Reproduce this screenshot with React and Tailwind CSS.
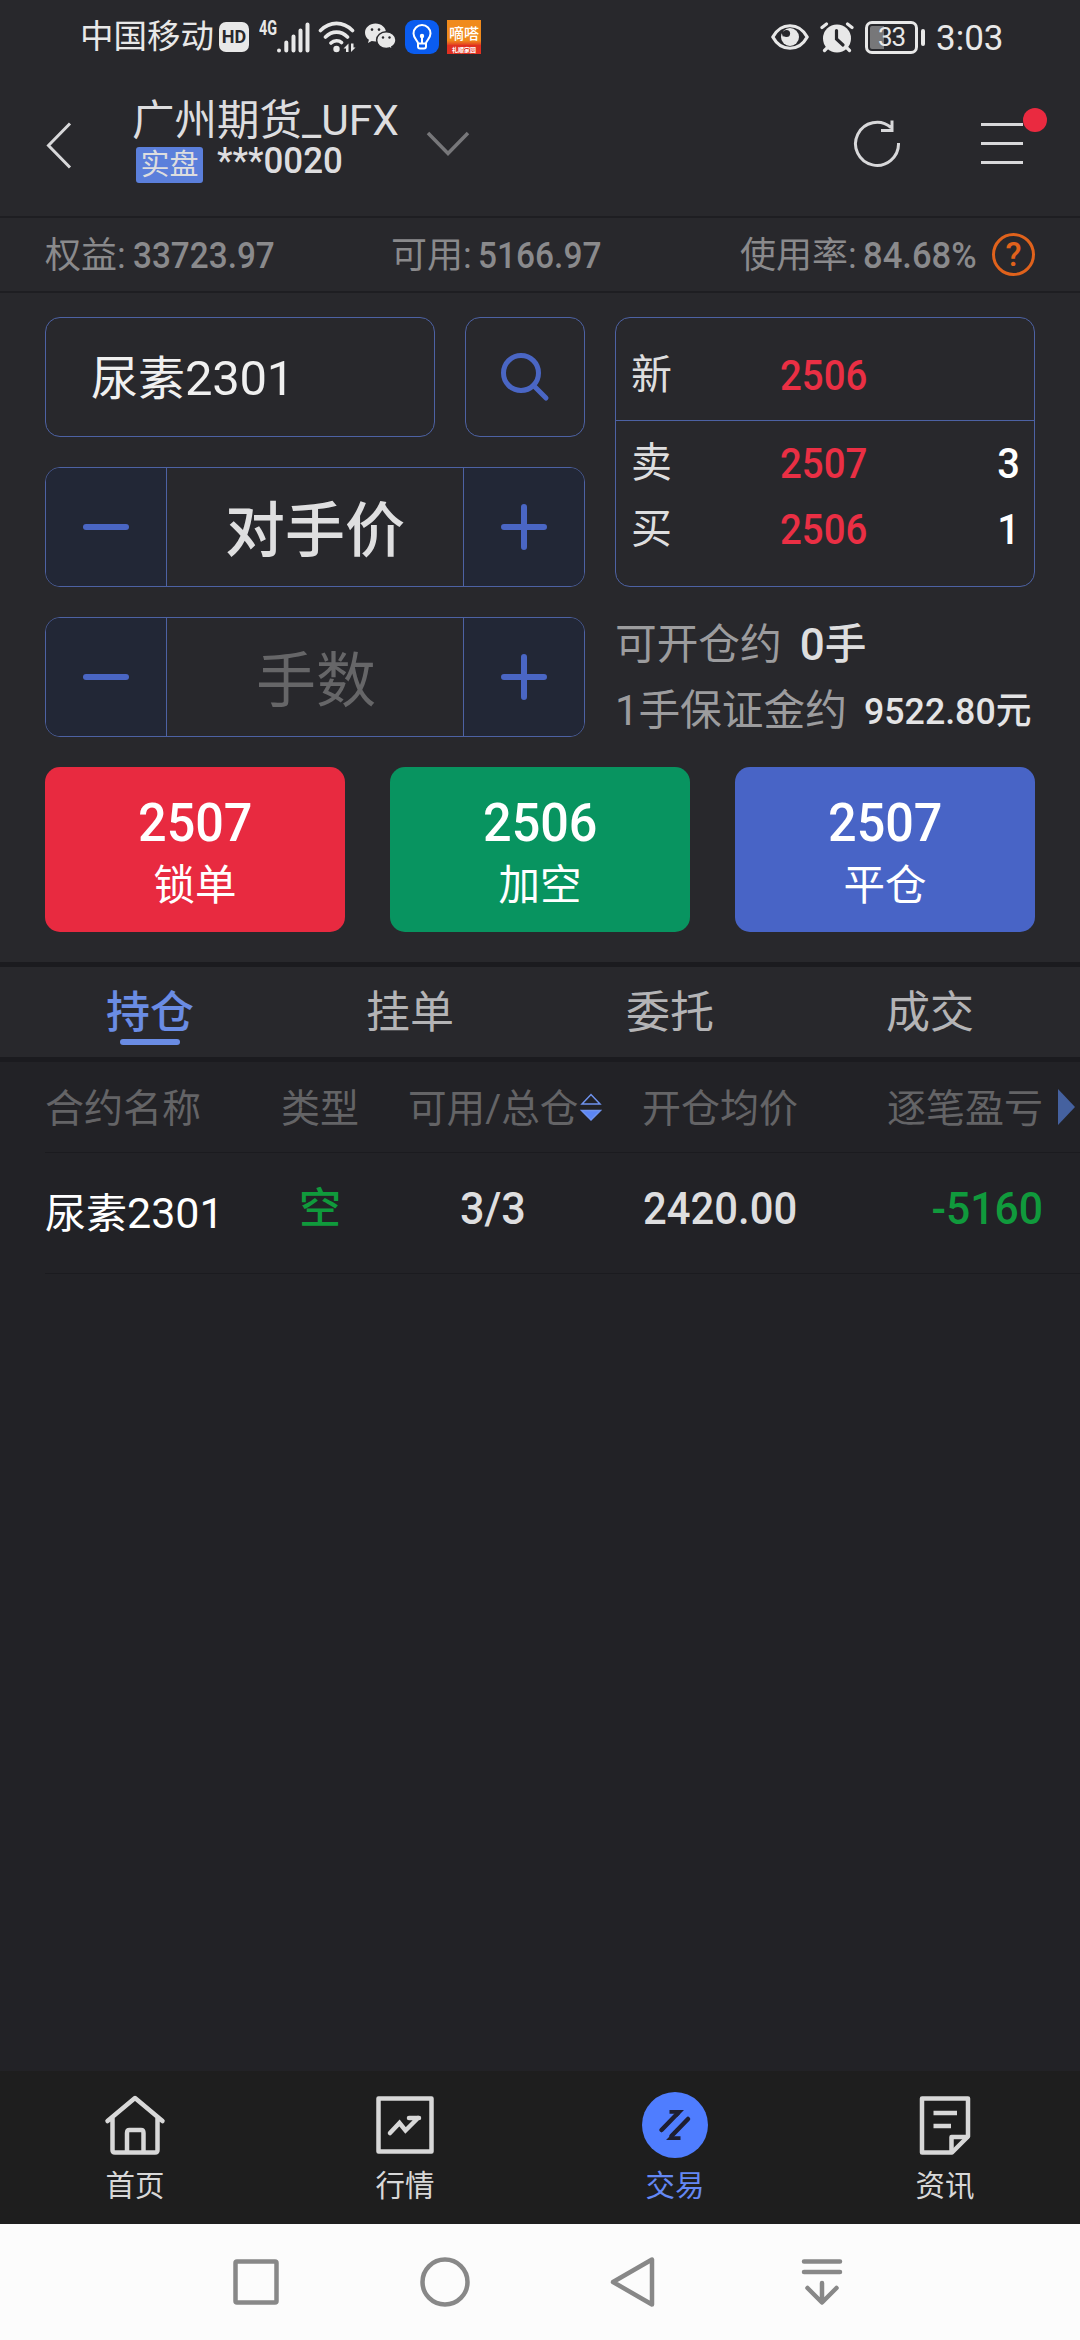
const Num = ({ className = '', children }) => (
  <span className={`inline-block font-['Roboto','Noto_Sans_CJK_SC',sans-serif] font-medium whitespace-nowrap ${className}`}>{children}</span>
)

function StatusBar() {
  return (
    <div className="flex h-[74px] items-center pl-[80px] text-[#e8e8e8]">
      <span className="w-[139px] text-[33.500px] leading-none whitespace-nowrap">中国移动</span>
      <span className="flex h-[30px] w-[30px] shrink-0 items-center justify-center rounded-[7px] bg-[#e8e8e8] font-['Roboto',sans-serif] text-[18px] leading-none font-bold text-[#28282c]">HD</span>
      <span className="ml-[10px] w-[18px] shrink-0 pb-[18px] font-['Roboto',sans-serif] text-[20px] leading-none font-bold"><span className="inline-block origin-left scale-x-[0.72]">4G</span></span>
      <svg className="h-[31px] w-[33px] shrink-0" viewBox="0 0 33 31" stroke="#e8e8e8" strokeWidth="4" strokeLinecap="round">
        <path d="M2 28.5V28.6M9.300 28.500V20.500M16.500 28.500V14.500M23.500 28.500V8.500M30.500 28.500V2.500" />
      </svg>
      <svg className="ml-[8px] h-[32px] w-[40px] shrink-0" viewBox="0 0 40 32" fill="none" stroke="#e8e8e8" strokeWidth="3.600" strokeLinecap="round">
        <path d="M2.500 9.500C12 0 25 0 34.500 9.500M7.500 16C14 9.500 23 9.500 29.500 16M13 22C16 19 21 19 23.500 21.500" />
        <circle cx="18.500" cy="28" r="3.200" fill="#e8e8e8" stroke="none" />
        <path d="M25.500 27.500L30.500 22.500V31H28V27.500zM33 22.500V31L37.500 26.500H35.500V22.500z" stroke="none" fill="#e8e8e8" />
      </svg>
      <svg className="ml-[7px] h-[28px] w-[32px] shrink-0" viewBox="0 0 32 28" fill="#e8e8e8">
        <path d="M10.500 0.500C4.700 0.500 0 4.600 0 9.700c0 2.900 1.500 5.400 3.900 7.100L3 20l3.700-2c1.200.3 2.500.5 3.800.5C16.300 18.500 21 14.600 21 9.600S16.300.5 10.500.5z" />
        <path d="M21.300 8.800c-5.500 0-9.700 3.700-9.700 8.300s4.200 8.300 9.700 8.300c1.100 0 2.200-.2 3.200-.5l3.100 1.800-.8-2.800c2.500-1.500 4.200-4 4.200-6.800 0-4.600-4.300-8.300-9.700-8.300z" stroke="#28282c" strokeWidth="1.500" />
        <g fill="#28282c"><circle cx="7" cy="6.600" r="1.300" /><circle cx="14" cy="6.600" r="1.300" /><circle cx="18" cy="14.500" r="1.200" /><circle cx="24.500" cy="14.500" r="1.200" /></g>
      </svg>
      <svg className="ml-[8px] h-[34px] w-[34px] shrink-0" viewBox="0 0 34 34" fill="none" stroke="#fff" strokeWidth="2">
        <rect width="34" height="34" rx="9" fill="#0a5cf0" stroke="none" />
        <path d="M13 23.500C13 20.500 8.500 18.500 8.500 13.500a8.500 8.500 0 0 1 17 0c0 5-4.500 7-4.500 10V26.500Q21 28.500 19 28.500H15Q13 28.500 13 26.500zM13 23.500h8M17 23v-7" />
        <circle cx="17" cy="16" r="2.200" fill="#fff" stroke="none" />
      </svg>
      <span className="ml-[8px] flex h-[34px] w-[34px] shrink-0 flex-col justify-between overflow-hidden bg-linear-to-b from-[#f08a1c] from-60% to-[#e03020] to-75% text-white">
        <span className="pt-[7px] text-center text-[15px] leading-none font-medium whitespace-nowrap">嘀嗒</span>
        <span className="flex h-[9px] items-center justify-center text-[6px] leading-none font-bold whitespace-nowrap">礼顺家园</span>
      </span>
      <svg className="ml-[290px] h-[28px] w-[38px] shrink-0" viewBox="0 0 38 28" fill="none">
        <path d="M1.800 14C10-1 28-1 36.200 14 28 29 10 29 1.800 14z" stroke="#e8e8e8" strokeWidth="3.200" strokeLinejoin="round" />
        <circle cx="19" cy="14" r="9" fill="#e8e8e8" />
        <circle cx="15.500" cy="10.500" r="3.600" fill="#28282c" />
        <path d="M10 8l5 1-3 5z" fill="#28282c" />
      </svg>
      <svg className="ml-[11px] h-[31px] w-[34px] shrink-0" viewBox="0 0 34 31" fill="none" strokeLinecap="round">
        <circle cx="17" cy="16.500" r="14" fill="#e8e8e8" />
        <path d="M2 5.500L6.500 2M32 5.500L27.500 2M4.500 28.500l3-3M29.500 28.500l-3-3" stroke="#e8e8e8" strokeWidth="3.200" />
        <path d="M16.500 8.500v8.500l6.500 6" stroke="#28282c" strokeWidth="3.200" />
      </svg>
      <span className="ml-[11px] flex h-[33px] w-[53px] shrink-0 items-center justify-center rounded-[7px] border-[3px] border-[#e8e8e8] bg-linear-to-r from-[#777779] from-33% to-transparent to-33% bg-origin-content p-[2px] font-['Roboto',sans-serif] text-[26px] leading-none [background-clip:content-box]"><span className="-tracking-[1px]">33</span></span>
      <span className="ml-[3px] h-[17px] w-[4px] shrink-0 rounded-[2px] bg-[#e8e8e8]" />
      <span className="ml-[11px] pt-[2px] font-['Roboto',sans-serif] text-[35px] leading-none">3:03</span>
    </div>
  )
}

function Header() {
  return (
    <div className="flex h-[142px] text-[#dddddf]">
      <svg className="mt-[46px] ml-[46px] h-[50px] w-[26px] shrink-0" viewBox="0 0 26 50" fill="none" stroke="#d8d8da" strokeWidth="3">
        <path d="M24 3.500L2.500 25.500L24 47.500" />
      </svg>
      <div className="mt-[25px] ml-[60px] w-[270px] shrink-0">
        <div className="h-[48px] text-[42.500px] leading-[44px] whitespace-nowrap">广州期货_UFX</div>
        <div className="flex h-[36px] items-center pl-[4px]">
          <span className="flex h-[36px] w-[67px] items-center justify-center rounded-[3px] bg-[#5b7fdb] text-[29px] leading-none">实盘</span>
          <Num className="ml-[14px] origin-left scale-x-[0.97] pb-[8px] text-[36px] leading-none">***0020</Num>
        </div>
      </div>
      <svg className="mt-[56px] ml-[24px] h-[28px] w-[44px] shrink-0" viewBox="0 0 44 28" fill="none" stroke="#77777a" strokeWidth="3.500">
        <path d="M2 3L22 23.500L42 3" />
      </svg>
      <svg className="mt-[44px] ml-[383px] h-[50px] w-[48px] shrink-0" viewBox="0 0 48 50" fill="none" stroke="#d8d8da" strokeWidth="3">
        <path d="M45.500 25A21.500 21.500 0 1 1 38 9.500M39 2.500V12.500H28" />
      </svg>
      <div className="relative mt-[49px] ml-[80px] h-[41px] w-[42px] shrink-0">
        <div className="flex h-full flex-col justify-between"><i className="h-[3px] bg-[#d8d8da]" /><i className="h-[3px] bg-[#d8d8da]" /><i className="h-[3px] bg-[#d8d8da]" /></div>
        <span className="absolute -top-[15px] left-[42px] h-[24px] w-[24px] rounded-full bg-[#ea2a40]" />
      </div>
    </div>
  )
}

function Funds() {
  return (
    <div className="flex h-[77px] items-center border-y-2 border-[#1e1e22] pb-[1px] text-[36px] leading-none whitespace-nowrap text-[#8a8a8c]">
      <div className="ml-[45px] flex w-[346px] items-center pt-[4px]"><span className="w-[88px]">权益:</span><Num className="origin-left scale-x-[0.925]">33723.97</Num></div>
      <div className="flex w-[347px] items-center pt-[4px]"><span className="w-[87px]">可用:</span><Num className="origin-left scale-x-[0.93]">5166.97</Num></div>
      <div className="flex w-[254px] items-center pt-[4px]"><span className="w-[125px] pl-[2px]">使用率:</span><Num className="origin-left scale-x-[0.96]">84.68%</Num></div>
      <span className="flex h-[43px] w-[43px] items-center justify-center rounded-full border-[3px] border-[#e0621c] font-['Roboto',sans-serif] text-[33px] leading-none font-medium text-[#e0621c]">?</span>
    </div>
  )
}

function Stepper({ children, muted }) {
  return (
    <div className="flex h-[120px] w-[540px] overflow-hidden rounded-[15px] border border-[#4d62a4]">
      <div className="flex w-[121px] items-center justify-center border-r border-[#4d62a4] bg-[#222736]"><i className="h-[6px] w-[46px] rounded-[3px] bg-[#4a66c4]" /></div>
      <div className={muted ? 'flex flex-1 items-center justify-center pt-[9px] pl-[2px] text-[60px] leading-none text-[#666668]' : 'flex flex-1 items-center justify-center pt-[9px] text-[60px] leading-none font-medium text-[#dfdfe0]'}>{children}</div>
      <div className="flex w-[121px] items-center justify-center border-l border-[#4d62a4] bg-[#222736]">
        <svg className="h-[46px] w-[46px]" viewBox="0 0 46 46" stroke="#4a66c4" strokeWidth="6" strokeLinecap="round"><path d="M3 23H43M23 3V43" /></svg>
      </div>
    </div>
  )
}

function QuoteRow({ label, price, qty }) {
  return (
    <div className="flex h-[66px] items-center pt-[3px] pr-[14px] pl-[15px] text-[41px] leading-none">
      <span className="w-[149px] text-[#dededf]">{label}</span>
      <Num className="origin-left scale-x-[0.915] text-[42px] text-[#ea2f44]">{price}</Num>
      <Num className="ml-auto origin-right scale-x-[0.95] text-[42px] text-white">{qty}</Num>
    </div>
  )
}

function OrderForm() {
  return (
    <div className="flex h-[449px] gap-[30px] px-[45px] pt-[24px]">
      <div className="flex flex-col gap-[30px]">
        <div className="flex gap-[30px]">
          <div className="flex h-[120px] w-[390px] items-center rounded-[15px] border border-[#4d62a4] pt-[2px] pl-[45px] text-[47px] leading-none text-[#f0f0f0]">尿素<span className="text-[49px] tracking-[-0.300px]">2301</span></div>
          <div className="flex h-[120px] w-[120px] items-center justify-center rounded-[15px] border border-[#4d62a4]">
            <svg className="h-[50px] w-[50px]" viewBox="0 0 50 50" fill="none" stroke="#4a66c4" strokeWidth="5" strokeLinecap="round"><circle cx="21" cy="21" r="17.500" /><path d="M33.500 33.500L46 46" /></svg>
          </div>
        </div>
        <Stepper>对手价</Stepper>
        <Stepper muted>手数</Stepper>
      </div>
      <div className="w-[420px] shrink-0">
        <div className="h-[270px] rounded-[15px] border border-[#4d62a4]">
          <div className="border-b border-[#4d62a4] pt-[23px] pb-[13px]"><QuoteRow label="新" price="2506" /></div>
          <div className="pt-[8px]"><QuoteRow label="卖" price="2507" qty="3" /><QuoteRow label="买" price="2506" qty="1" /></div>
        </div>
        <div className="mt-[25px] flex h-[66px] items-center text-[41.700px] leading-none whitespace-nowrap text-[#9c9c9e]">
          可开仓约<span className="ml-[18px] flex items-center font-medium text-[#dededf]"><Num className="text-[44px]">0</Num>手</span>
        </div>
        <div className="flex h-[66px] items-center text-[41.700px] leading-none whitespace-nowrap text-[#9c9c9e]">
          1手保证金约<Num className="ml-[17px] origin-left scale-x-[0.965] text-[37px] text-[#e4e4e5]">9522.80元</Num>
        </div>
      </div>
    </div>
  )
}

function TradeButtons() {
  const base = 'flex h-[165px] w-[300px] flex-col items-center rounded-[15px] text-white '
  const items = [['2507', '锁单', 'bg-[#e82a40]'], ['2506', '加空', 'bg-[#089460]'], ['2507', '平仓', 'bg-[#4864c6]']]
  return (
    <div className="flex h-[220px] justify-between px-[45px] pt-[25px]">
      {items.map(([p, l, c]) => (
        <div key={l} className={base + c}>
          <Num className="mt-[30px] scale-x-[0.95] text-[53px] leading-none">{p}</Num>
          <span className="mt-[15px] text-[41.500px] leading-none">{l}</span>
        </div>
      ))}
    </div>
  )
}

function Tabs() {
  return (
    <div className="flex h-[100px] border-y-[5px] border-[#1b1b1f] pr-[20px] pl-[20px] text-[44px] leading-none text-[#b4b4b6]">
      <div className="flex flex-1 flex-col items-center pt-[24px] font-medium text-[#6a8ce4]">持仓<i className="mt-[4px] h-[6px] w-[60px] rounded-[3px] bg-[#6a8ce4]" /></div>
      {['挂单', '委托', '成交'].map((t) => <div key={t} className="flex flex-1 justify-center pt-[24px]">{t}</div>)}
    </div>
  )
}

function Positions() {
  return (
    <div className="h-[1009px] bg-[#222226] leading-none whitespace-nowrap">
      <div className="ml-[45px] flex h-[91px] items-center border-b border-[#1b1b1f] pt-[5px] text-[39px] text-[#646466]">
        <span className="w-[236px]">合约名称</span>
        <span className="w-[127px]">类型</span>
        <span className="w-[172px]"><span className="inline-block origin-left scale-x-[0.99]">可用/总仓</span></span>
        <svg className="mb-[5px] h-[30px] w-[22px]" viewBox="0 0 22 30" stroke="#6f93ee" strokeWidth="1.500"><path d="M2 12L11 2.500L20 12z" fill="none" /><path d="M1.500 18.500H20.500L11 28z" fill="#5c86f4" /></svg>
        <span className="ml-[40px] w-[245px]">开仓均价</span>
        <span className="w-[171px]">逐笔盈亏</span>
        <svg className="mb-[5px] h-[36px] w-[17px]" viewBox="0 0 17 36"><path d="M0 0L17 18L0 36z" fill="#45619f" /></svg>
      </div>
      <div className="ml-[45px] flex h-[121px] items-center border-b border-[#1b1b1f] text-[41px] text-white">
        <span className="w-[254px]">尿素<span className="text-[43px]">2301</span></span>
        <span className="w-[161px] pb-[9px] text-[42px] font-medium text-[#109a3c]">空</span>
        <Num className="w-[183px] origin-left scale-x-[0.98] pb-[9px] text-[44px] text-[#dededf]">3/3</Num>
        <Num className="origin-left scale-x-[0.95] pb-[9px] text-[44px] text-[#dededf]">2420.00</Num>
        <Num className="mr-[37px] ml-auto origin-right scale-x-[0.97] pb-[9px] text-[44px] text-[#109a3c]">-5160</Num>
      </div>
    </div>
  )
}

const Item = ({ label, active, children }) => (
  <div className={active ? 'flex flex-1 flex-col items-center text-[#6488f4]' : 'flex flex-1 flex-col items-center text-[#d8d8d8]'}>
    <svg className="mt-[19px] h-[70px] w-[70px]" viewBox="0 0 70 70" fill="none" stroke="#d8d8d8" strokeWidth="4.500" strokeLinejoin="round" strokeLinecap="round">{children}</svg>
    <span className="mt-[12px] text-[29.500px] leading-none">{label}</span>
  </div>
)

function TabBar() {
  return (
    <div className="flex h-[153px] bg-[#1e1e1e]">
      <Item label="首页"><path d="M7.500 31L35 8L62.500 31M12.500 28V60Q12.500 62.500 15 62.500H55Q57.500 62.500 57.500 60V28M27 62V43Q27 40 29.500 40H41Q43.500 40 43.500 43V62" /></Item>
      <Item label="行情"><path d="M8.500 8.500H61.500V61.500H8.500z" /><path d="M20 43L29.500 33L35.500 40.500L48 28M39 28H49" strokeLinejoin="miter" /></Item>
      <Item label="交易" active>
        <circle cx="35" cy="35" r="33" fill="#4f7dff" stroke="none" />
        <path d="M21.500 40L38 23M48 29L31.500 46" stroke="#1e1e30" strokeWidth="4.500" />
        <path d="M29.500 20H44L37 27V23.800H29.500zM40.500 50H26L33 43V46.200H40.500z" fill="#1e1e30" stroke="none" />
      </Item>
      <Item label="资讯"><path d="M12 8.500H58V46.500L42 62.500H12z" /><path d="M57 47H41.500V61.500" /><path d="M23.500 23H47M23.500 36H41" strokeLinecap="butt" /></Item>
    </div>
  )
}

function SystemNav() {
  return (
    <div className="flex h-[116px] items-start gap-[136.500px] bg-[#fcfcfc] pt-[32px] pl-[230px]">
      <svg className="h-[52px] w-[52px]" viewBox="0 0 52 52" fill="none" stroke="#888" strokeWidth="4.500"><rect x="5.500" y="5.500" width="41" height="41" rx="1.500" /></svg>
      <svg className="h-[52px] w-[52px]" viewBox="0 0 52 52" fill="none" stroke="#888" strokeWidth="4.500"><circle cx="26" cy="26" r="22.500" /></svg>
      <svg className="h-[52px] w-[52px]" viewBox="0 0 52 52" fill="none" stroke="#888" strokeWidth="4.500" strokeLinejoin="round"><path d="M45 3.500V48.500L6 26z" /></svg>
      <svg className="h-[52px] w-[52px]" viewBox="0 0 52 52" fill="none" stroke="#888" strokeWidth="4.500" strokeLinecap="round" strokeLinejoin="round"><path d="M8 5.500H44M8 16H44M26 27V46M11.500 32L26 46.500L40.500 32" /></svg>
    </div>
  )
}

export default function App() {
  return (
    <div className="flex h-[2340px] w-[1080px] flex-col overflow-hidden bg-[#28282c] font-['Roboto','Noto_Sans_CJK_SC',sans-serif]">
      <StatusBar />
      <Header />
      <Funds />
      <OrderForm />
      <TradeButtons />
      <Tabs />
      <Positions />
      <TabBar />
      <SystemNav />
    </div>
  )
}
